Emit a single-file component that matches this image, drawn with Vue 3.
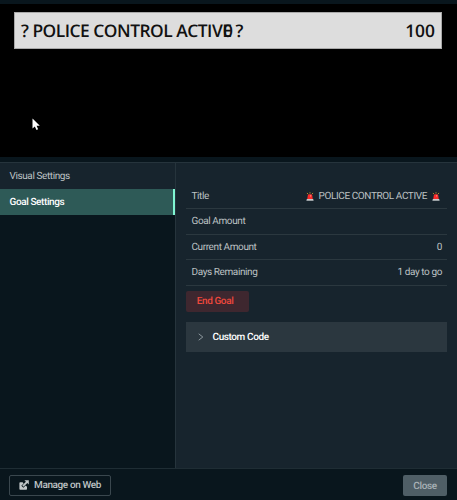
<script setup>
import { ref } from 'vue';

const tabs = ['Visual Settings', 'Goal Settings'];
const activeTab = ref('Goal Settings');

const rows = [
  { label: 'Title', value: 'POLICE CONTROL ACTIVE', siren: true },
  { label: 'Goal Amount', value: '' },
  { label: 'Current Amount', value: '0' },
  { label: 'Days Remaining', value: '1 day to go' },
];
</script>

<template>
  <div class="window">
    <div class="preview">
      <div class="goal-bar">
        <span class="goal-title">? POLICE CONTROL ACTIVE ?</span>
        <span class="goal-current">0</span>
        <span class="goal-total">100</span>
      </div>
      <svg class="cursor" width="9" height="13" viewBox="0 0 9 13">
        <path d="M0.5 0.5V10.4L2.8 8.4L4.5 12L6.1 11.2L4.6 7.8H7.8Z" fill="#fff" />
      </svg>
    </div>

    <div class="content">
      <nav class="sidebar">
        <div
          v-for="tab in tabs"
          :key="tab"
          class="tab"
          :class="{ active: tab === activeTab }"
          @click="activeTab = tab"
        >
          {{ tab }}
        </div>
      </nav>

      <main class="panel">
        <div v-for="row in rows" :key="row.label" class="row">
          <span>{{ row.label }}</span>
          <span class="value">
            <svg v-if="row.siren" class="siren" viewBox="0 0 9 10">
              <path d="M1.2 1L2.2 2.4M4.5 0.2V1.7M7.8 1L6.8 2.4" stroke="#d9a62e" stroke-width="0.9" />
              <path d="M1.4 8L2 3.9Q2.2 2.6 3.4 2.6H5.6Q6.8 2.6 7 3.9L7.6 8Z" fill="#fa2c2a" />
              <path d="M4.8 3.6H5.8V5H4.8Z" fill="#ffaba0" />
              <path d="M1 7.9H8L8.6 9.8H0.4Z" fill="#c5c8ca" />
            </svg>
            <span>{{ row.value }}</span>
            <svg v-if="row.siren" class="siren" viewBox="0 0 9 10">
              <path d="M1.2 1L2.2 2.4M4.5 0.2V1.7M7.8 1L6.8 2.4" stroke="#d9a62e" stroke-width="0.9" />
              <path d="M1.4 8L2 3.9Q2.2 2.6 3.4 2.6H5.6Q6.8 2.6 7 3.9L7.6 8Z" fill="#fa2c2a" />
              <path d="M4.8 3.6H5.8V5H4.8Z" fill="#ffaba0" />
              <path d="M1 7.9H8L8.6 9.8H0.4Z" fill="#c5c8ca" />
            </svg>
          </span>
        </div>
        <button class="end-goal">End Goal</button>
        <div class="custom-code">
          <svg width="6" height="8" viewBox="0 0 6 8">
            <path d="M0.7 0.8L4.8 4L0.7 7.2" fill="none" stroke="#8d989e" stroke-width="1" />
          </svg>
          <span>Custom Code</span>
        </div>
      </main>
    </div>

    <footer class="footer">
      <button class="manage">
        <svg width="10" height="10" viewBox="0 0 10 10">
          <path d="M3.6 2.2H1.2Q0.4 2.2 0.4 3V9Q0.4 9.8 1.2 9.8H7.2Q8 9.8 8 9V6.8L6.6 5.6L4.4 7.8L2.3 5.7L4.6 3.4Z" fill="#c3c9cb" />
          <path d="M5.4 0.2H9.8V4.6L8.3 3.1L4.5 6.8L3.3 5.6L6.9 1.7Z" fill="#c3c9cb" />
        </svg>
        <span>Manage on Web</span>
      </button>
      <button class="close">Close</button>
    </footer>
  </div>
</template>

<style>
body {
  background: #09161d;
}
</style>

<style scoped>
.window {
  display: flex;
  flex-direction: column;
  height: 500px;
  box-sizing: border-box;
  padding-top: 4px;
  background: #09161d;
  font-family: Roboto, sans-serif;
  font-size: 10px;
  letter-spacing: -0.4px;
  color: #bdc2c4;
  text-rendering: geometricPrecision;
  overflow: hidden;
}

.preview {
  position: relative;
  height: 153px;
  flex: none;
  box-sizing: border-box;
  padding: 7.5px 15px 0 14px;
  background: #000;
}

.goal-bar {
  position: relative;
  display: flex;
  align-items: center;
  justify-content: space-between;
  height: 37px;
  box-sizing: border-box;
  padding: 1px 6px 0;
  border: 1px solid #a9a9a9;
  background: #ddd;
  color: #111;
  font-family: "Open Sans", sans-serif;
  font-size: 17.4px;
  font-weight: 600;
  letter-spacing: 0;
  white-space: pre;
}

.goal-title {
  letter-spacing: -0.5px;
}

/* current amount sits in the middle, over the title */
.goal-current {
  position: absolute;
  left: 50%;
  transform: translateX(-50%);
}

.cursor {
  position: absolute;
  left: 32px;
  top: 114px;
}

.content {
  display: flex;
  flex: none;
  height: 305px;
  margin-top: 5px;
  border-top: 1px solid #26343c;
  border-bottom: 1px solid #1f2d34;
}

.sidebar {
  width: 175px;
  flex: none;
  border-right: 1px solid #26343c;
}

.tab {
  height: 26px;
  line-height: 26px;
  box-sizing: border-box;
  padding: 0.6px 0 0 9.5px;
  background: #17242d;
}

.tab.active {
  border-right: 2px solid #80f5d2;
  background: #2e5a57;
  color: #fff;
  font-weight: 500;
}

.panel {
  flex: 1;
  padding: 20.4px 10px 0;
  background: #17242d;
}

.row {
  display: flex;
  align-items: center;
  justify-content: space-between;
  height: 25.6px;
  box-sizing: border-box;
  padding: 1px 5px 0 5.5px;
  border-bottom: 1px solid #2b383f;
}

.value {
  display: flex;
  align-items: center;
  gap: 4px;
}

.siren {
  width: 8px;
  height: 9px;
  margin-right: 1px;
}

.siren:last-child {
  margin: 0 2px 0 1px;
}

.end-goal {
  display: block;
  width: 63px;
  height: 21px;
  margin-top: 5.2px;
  padding: 0 5px 0 0;
  border: 0;
  border-radius: 2px;
  background: #3e272f;
  color: #ee473c;
  font: 500 10px Roboto, sans-serif;
  letter-spacing: inherit;
  text-rendering: inherit;
}

.custom-code {
  display: flex;
  align-items: center;
  gap: 9px;
  height: 30px;
  box-sizing: border-box;
  margin-top: 10px;
  padding: 1px 0 0 11.5px;
  background: #2b373f;
  color: #fff;
  font-weight: 500;
}

.footer {
  display: flex;
  flex: 1;
  align-items: center;
  justify-content: space-between;
  padding: 2px 10px 0 9px;
}

.manage,
.close {
  display: flex;
  align-items: center;
  justify-content: center;
  height: 21px;
  box-sizing: border-box;
  padding: 1px 0 0;
  border-radius: 2px;
  font: 500 10px Roboto, sans-serif;
  letter-spacing: inherit;
  text-rendering: inherit;
  color: #bdc2c4;
}

.manage {
  width: 102px;
  gap: 5px;
  padding: 0;
  border: 1px solid #3a474e;
  background: transparent;
}

.manage svg {
  margin-top: -1px;
}

.close {
  width: 44px;
  border: 0;
  background: #4f5e66;
  color: #a9b2b6;
}
</style>
